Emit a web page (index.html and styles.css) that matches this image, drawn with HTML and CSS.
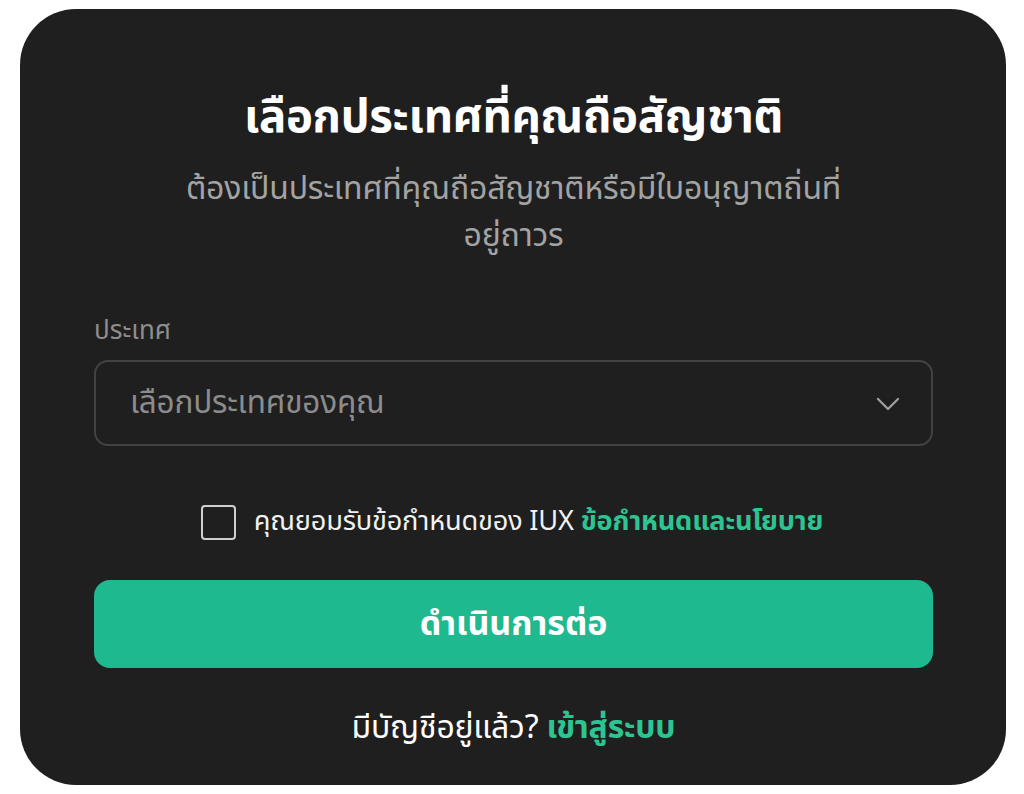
FILE: index.html
```html
<!DOCTYPE html>
<html lang="th">
<head>
<meta charset="utf-8">
<title>เลือกประเทศ</title>
<link rel="stylesheet" href="styles.css">
</head>
<body>
<div class="card">
  <h1 class="title">เลือกประเทศที่คุณถือสัญชาติ</h1>
  <p class="subtitle">ต้องเป็นประเทศที่คุณถือสัญชาติหรือมีใบอนุญาตถิ่นที่<br>อยู่ถาวร</p>
  <div class="field">
    <label class="label">ประเทศ</label>
    <div class="select">
      <span class="placeholder">เลือกประเทศของคุณ</span>
      <svg class="chevron" width="24" height="14" viewBox="0 0 24 14" fill="none" stroke="#a0a0a0" stroke-width="2.2" stroke-linecap="round" stroke-linejoin="round"><path d="M2 2l10 10 10-10"/></svg>
    </div>
  </div>
  <div class="agree">
    <span class="checkbox"></span>
    <span class="agree-text">คุณยอมรับข้อกำหนดของ IUX <a class="link" href="#">ข้อกำหนดและนโยบาย</a></span>
  </div>
  <button class="btn">ดำเนินการต่อ</button>
  <p class="login">มีบัญชีอยู่แล้ว? <a class="link" href="#">เข้าสู่ระบบ</a></p>
</div>
</body>
</html>
```
FILE: styles.css
```css
html, body {
  margin: 0;
  padding: 0;
  background: #ffffff;
}
body {
  font-family: "Noto Sans Thai", "Noto Sans Thai UI", "Noto Sans", "DejaVu Sans", sans-serif;
  padding: 9px 0 0 20px;
}
.card {
  width: 986px;
  height: 776px;
  box-sizing: border-box;
  background: #1f1f1f;
  border-radius: 56px;
  padding: 81px 73px 0 74px;
  display: flex;
  flex-direction: column;
}
.title {
  margin: 0;
  text-align: center;
  color: #ffffff;
  font-size: 45.5px;
  font-weight: 700;
  line-height: 56px;
  letter-spacing: -0.3px;
}
.subtitle {
  margin: 20px 0 0;
  text-align: center;
  color: #a3a3a3;
  font-size: 32px;
  line-height: 47px;
  letter-spacing: -0.2px;
}
.field {
  margin-top: 54px;
  display: flex;
  flex-direction: column;
}
.label {
  color: #8e8e8e;
  font-size: 26px;
  line-height: 34px;
}
.select {
  margin-top: 12px;
  height: 86px;
  box-sizing: border-box;
  border: 2px solid #424242;
  border-radius: 14px;
  display: flex;
  align-items: center;
  justify-content: space-between;
  padding: 0 31px 0 34px;
}
.placeholder {
  color: #8c8c8c;
  font-size: 31.5px;
  letter-spacing: -0.2px;
}
.chevron {
  display: block;
  margin-top: 2px;
}
.agree {
  margin-top: 58px;
  height: 36px;
  display: flex;
  align-items: center;
  justify-content: center;
  gap: 18px;
  padding-right: 3px;
}
.checkbox {
  width: 35px;
  height: 35px;
  box-sizing: border-box;
  border: 2px solid #cfcfcf;
  border-radius: 4px;
}
.agree-text {
  color: #f2f2f2;
  font-size: 27.2px;
  line-height: 36px;
  letter-spacing: -0.2px;
}
.link {
  color: #2ec492;
  font-weight: 700;
  text-decoration: none;
}
.btn {
  margin-top: 40px;
  height: 88px;
  border: none;
  border-radius: 16px;
  background: #1fb990;
  color: #ffffff;
  font-family: inherit;
  font-size: 34px;
  font-weight: 700;
  cursor: pointer;
}
.login {
  margin: 38px 0 0;
  text-align: center;
  color: #ffffff;
  font-size: 32px;
  line-height: 44px;
  letter-spacing: -0.2px;
}
```
